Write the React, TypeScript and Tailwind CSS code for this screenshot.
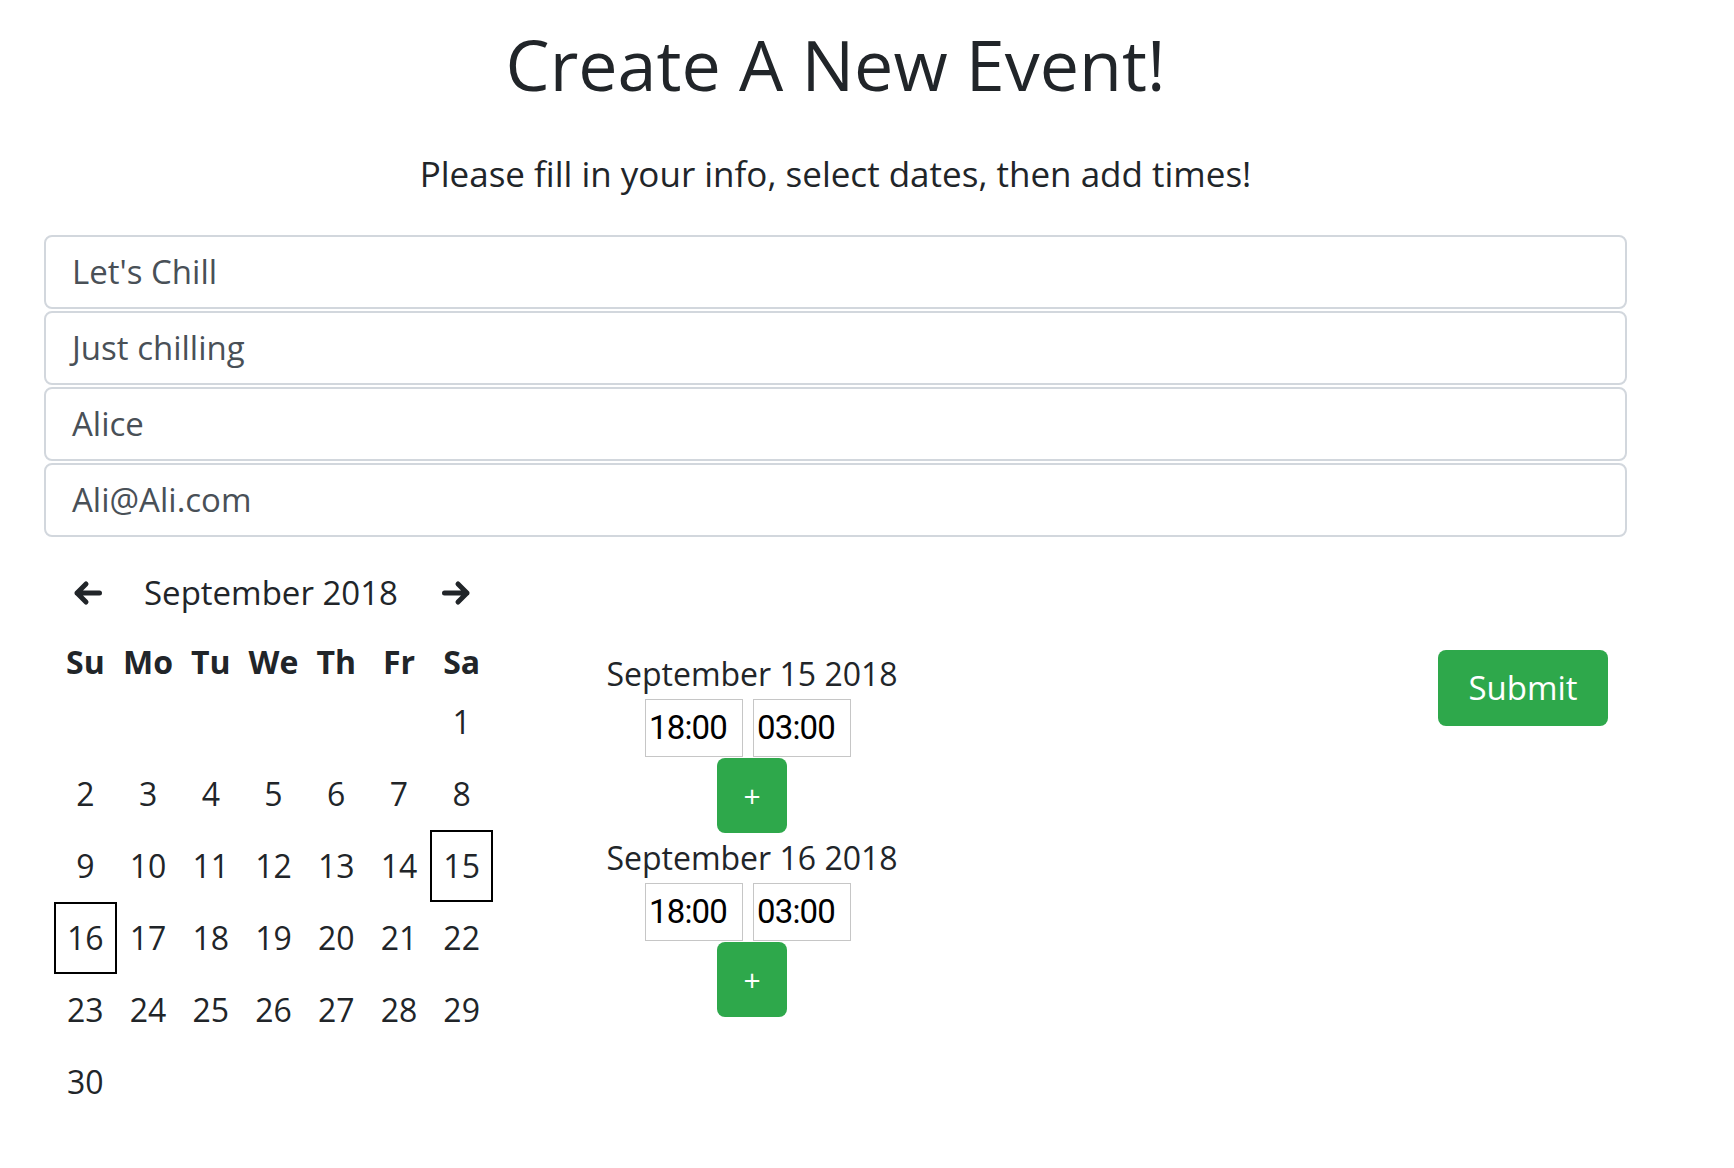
const font = { fontFamily: '"Open Sans", sans-serif' };

const days = ['Su', 'Mo', 'Tu', 'We', 'Th', 'Fr', 'Sa'];
// September 2018 starts on a Saturday
const cells: (number | null)[] = [
  null, null, null, null, null, null,
  ...Array.from({ length: 30 }, (_, i) => i + 1),
];
const selected = [15, 16];

const fields = ["Let's Chill", 'Just chilling', 'Alice', 'Ali@Ali.com'];

function Arrow({ dir }: { dir: 'left' | 'right' }) {
  return (
    <svg
      width="31"
      height="28"
      viewBox="0 0 31 28"
      fill="none"
      stroke="#212529"
      strokeWidth="5"
      strokeLinecap="round"
      strokeLinejoin="round"
      className={dir === 'right' ? 'rotate-180' : ''}
    >
      <path d="M27.5 14H5M14 5L5 14l9 9" />
    </svg>
  );
}

function TimeSlot({ label }: { label: string }) {
  return (
    <div className="flex flex-col items-center">
      <div className="h-[50px] leading-[50px] text-[32px] text-[#212529]">{label}</div>
      <div className="flex gap-[10px] mr-[8px]">
        {['18:00', '03:00'].map((t) => (
          <div
            key={t}
            className="w-[98px] h-[58px] border border-[#c6c6c6] pl-[3px] flex items-center text-[33px] text-black tracking-tight"
            style={{ fontFamily: 'Roboto, sans-serif' }}
          >
            {t}
          </div>
        ))}
      </div>
      <button className="mt-[1px] w-[70px] h-[75px] rounded-[8px] bg-[#2ea84b] text-white text-[30px] leading-none flex items-center justify-center">
        +
      </button>
    </div>
  );
}

export default function App() {
  return (
    <div className="min-h-screen bg-white text-[#212529]" style={font}>
      <div className="ml-[44px] w-[1583px]">
        {/* Heading */}
        <h1 className="mt-[22px] text-center text-[70px] leading-[84px] font-normal">Create A New Event!</h1>
        <p className="mt-[44px] text-center text-[35px] leading-[48px]">
          Please fill in your info, select dates, then add times!
        </p>

        {/* Form fields */}
        <div className="mt-[37px] flex flex-col gap-[2px]">
          {fields.map((f) => (
            <div
              key={f}
              className="h-[74px] border-2 border-[#d2d7dd] rounded-[8px] px-[26px] flex items-center text-[33px] text-[#495057]"
            >
              {f}
            </div>
          ))}
        </div>

        <div className="flex items-start">
          {/* Calendar */}
          <div className="pl-[10px] pt-[32px] w-[449px]">
            <div className="h-[48px] flex items-center">
              <span className="ml-[18px]"><Arrow dir="left" /></span>
              <span className="ml-[41px] text-[33px]">September 2018</span>
              <span className="ml-[43px]"><Arrow dir="right" /></span>
            </div>
            <div className="mt-[20px] grid grid-cols-7 w-[439px]">
              {days.map((d) => (
                <div key={d} className="h-[49px] flex items-center justify-center text-[32px] font-bold">
                  {d}
                </div>
              ))}
              {cells.map((c, i) => (
                <div
                  key={i}
                  className={
                    'h-[72px] flex items-center justify-center text-[32px] ' +
                    (c && selected.includes(c) ? 'border-2 border-black' : '')
                  }
                >
                  {c}
                </div>
              ))}
            </div>
          </div>

          {/* Times */}
          <div className="w-[518px] pt-[112px] flex flex-col items-center">
            <TimeSlot label="September 15 2018" />
            <TimeSlot label="September 16 2018" />
          </div>

          {/* Submit */}
          <div className="flex-1 flex justify-end pr-[19px] pt-[113px]">
            <button className="w-[170px] h-[76px] rounded-[8px] bg-[#2ea84b] text-white text-[33px]">
              Submit
            </button>
          </div>
        </div>
      </div>
    </div>
  );
}
